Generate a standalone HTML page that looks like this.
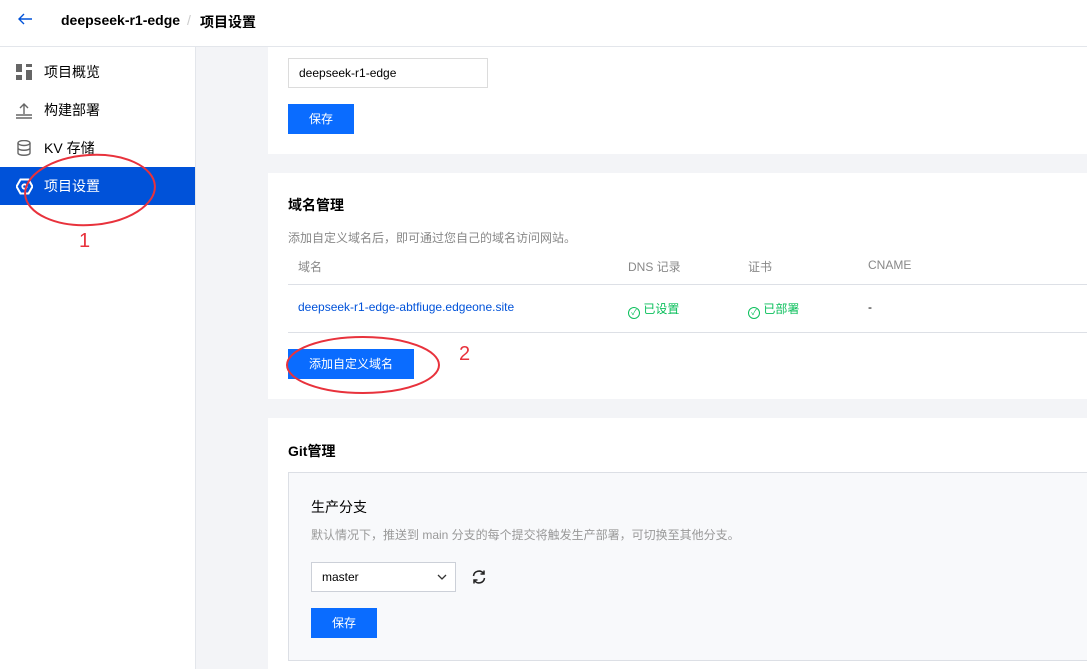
<!DOCTYPE html>
<html><head><meta charset="utf-8"><style>
*{margin:0;padding:0;box-sizing:border-box}
html,body{width:1087px;height:669px;overflow:hidden}
body{background:#f3f4f7;font-family:"Liberation Sans","Noto Sans CJK SC",sans-serif;font-size:14px;color:#000;position:relative}
.a{position:absolute}
.hdr{left:0;top:0;width:1087px;height:47px;background:#fff;border-bottom:1px solid #e3e6eb}
.side{left:0;top:47px;width:196px;height:622px;background:#fff;border-right:1px solid #e3e6eb}
.item{position:absolute;left:0;width:195px;height:38px;line-height:38px;padding-left:44px;font-size:14px;color:#000}
.item svg{position:absolute;left:16px;top:11px}
.card{background:#fff;left:268px;width:830px}
.btn{background:#0a6cff;color:#fff;font-size:12px;text-align:center;line-height:30px;height:30px}
.t{white-space:nowrap}
.line{height:1px;background:#dde0e6;left:288px;width:800px}
.g{color:#888;font-size:12px}
.ok{color:#0abf5b;font-size:12px}
</style></head><body>
<div class="a hdr">
<svg class="a" style="left:16px;top:12px" width="18" height="14" viewBox="0 0 18 14"><path d="M16 7H3M8 2L3 7l5 5" stroke="#0052d9" stroke-width="1.4" fill="none"/></svg>
<div class="a t" style="left:61px;top:12px;font-weight:bold;font-size:14px">deepseek-r1-edge</div>
<div class="a t" style="left:187px;top:12px;color:#ccc">/</div>
<div class="a t" style="left:200px;top:12px;font-weight:bold">项目设置</div>
</div>
<div class="a side">
<div class="item" style="top:6px"><svg width="17" height="17"><rect x="0" y="0" width="6" height="8" fill="#666"/><rect x="0" y="11" width="6" height="5" fill="#666"/><rect x="10" y="0" width="6" height="3" fill="#666"/><rect x="10" y="6" width="6" height="10" fill="#666"/></svg>项目概览</div>
<div class="item" style="top:44px"><svg width="17" height="17"><path d="M8 12V2M4 6l4-4 4 4M0 13h16M0 16h16" stroke="#666" stroke-width="1.4" fill="none"/></svg>构建部署</div>
<div class="item" style="top:82px"><svg width="17" height="17"><ellipse cx="8" cy="3" rx="6" ry="2.5" stroke="#666" stroke-width="1.4" fill="none"/><path d="M2 3v10c0 3 12 3 12 0V3M2 8c0 3 12 3 12 0" stroke="#666" stroke-width="1.4" fill="none"/></svg>KV 存储</div>
<div class="item" style="top:120px;background:#0052d9;color:#fff"><svg width="17" height="17"><path d="M4.5 1.5h8l4 7-4 7h-8l-4-7z" stroke="#fff" stroke-width="2" fill="none"/><circle cx="8.5" cy="8.5" r="2.2" stroke="#fff" stroke-width="1.8" fill="none"/></svg>项目设置</div>
</div>

<div class="a card" style="top:47px;height:107px"></div>
<div class="a" style="left:288px;top:58px;width:200px;height:30px;border:1px solid #dcdcdc;background:#fff;font-size:12px;line-height:28px;padding-left:10px">deepseek-r1-edge</div>
<div class="a btn" style="left:288px;top:104px;width:66px">保存</div>

<div class="a card" style="top:173px;height:226px"></div>
<div class="a t" style="left:288px;top:195px;font-weight:bold">域名管理</div>
<div class="a t g" style="left:288px;top:229px">添加自定义域名后，即可通过您自己的域名访问网站。</div>
<div class="a t g" style="left:298px;top:258px">域名</div>
<div class="a t g" style="left:628px;top:258px">DNS 记录</div>
<div class="a t g" style="left:748px;top:258px">证书</div>
<div class="a t g" style="left:868px;top:258px">CNAME</div>
<div class="a line" style="top:284px"></div>
<div class="a t" style="left:298px;top:300px;font-size:12px;color:#0052d9">deepseek-r1-edge-abtfiuge.edgeone.site</div>
<div class="a t ok" style="left:628px;top:300px"><span style="display:inline-block;width:12px;height:12px;border:1px solid #0abf5b;border-radius:50%;font-size:8px;line-height:10px;text-align:center;vertical-align:-2px">✓</span> 已设置</div>
<div class="a t ok" style="left:748px;top:300px"><span style="display:inline-block;width:12px;height:12px;border:1px solid #0abf5b;border-radius:50%;font-size:8px;line-height:10px;text-align:center;vertical-align:-2px">✓</span> 已部署</div>
<div class="a t" style="left:868px;top:300px;font-size:12px">-</div>
<div class="a line" style="top:332px"></div>
<div class="a btn" style="left:288px;top:349px;width:126px">添加自定义域名</div>

<div class="a card" style="top:418px;height:251px"></div>
<div class="a t" style="left:288px;top:441px;font-weight:bold">Git管理</div>
<div class="a" style="left:288px;top:472px;width:820px;height:189px;background:#f8f9fb;border:1px solid #dcdfe5"></div>
<div class="a t" style="left:311px;top:497px">生产分支</div>
<div class="a t g" style="left:311px;top:526px;color:#999">默认情况下，推送到 main 分支的每个提交将触发生产部署，可切换至其他分支。</div>
<div class="a" style="left:311px;top:562px;width:145px;height:30px;border:1px solid #ccd0d8;background:#fff;font-size:12px;line-height:28px;padding-left:10px">master<svg class="a" style="right:8px;top:11px" width="10" height="7"><path d="M1 1l4 4 4-4" stroke="#333" stroke-width="1.3" fill="none"/></svg></div>
<svg class="a" style="left:471px;top:569px" width="16" height="16" viewBox="0 0 16 16"><path d="M2.5 7A5.5 5.5 0 0 1 12.5 4.5M13.5 9A5.5 5.5 0 0 1 3.5 11.5" stroke="#222" stroke-width="1.5" fill="none"/><path d="M13 1.5v3.5H9.5M3 14.5V11h3.5" stroke="#222" stroke-width="1.5" fill="none"/></svg>
<div class="a btn" style="left:311px;top:608px;width:66px">保存</div>

<svg class="a" style="left:0;top:0" width="1087" height="669">
<ellipse cx="90" cy="190" rx="65" ry="35" stroke="#e8323c" stroke-width="2" fill="none" transform="rotate(-4 90 190)"/>
<ellipse cx="363" cy="365" rx="76" ry="28" stroke="#e8323c" stroke-width="2" fill="none"/>
<text x="79" y="247" fill="#e8323c" font-size="20" font-family="Liberation Sans">1</text>
<text x="459" y="360" fill="#e8323c" font-size="20" font-family="Liberation Sans">2</text>
</svg>
</body></html>
